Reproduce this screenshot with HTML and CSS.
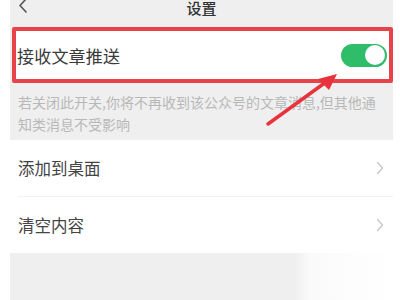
FILE: index.html
```html
<!DOCTYPE html>
<html lang="zh">
<head>
<meta charset="utf-8">
<link rel="stylesheet" href="styles.css">
</head>
<body>
<div class="screen">
  <div class="header">
    <svg class="back" width="12" height="16" viewBox="0 0 12 16"><polyline points="9,1 3,7.5 9,14" fill="none" stroke="#555" stroke-width="1.6" stroke-linecap="round" stroke-linejoin="round"/></svg>
    <span class="title">设置</span>
  </div>
  <div class="highlight">
    <div class="row">
      <span class="label">接收文章推送</span>
      <span class="toggle"><span class="knob"></span></span>
    </div>
  </div>
  <div class="note">若关闭此开关,你将不再收到该公众号的文章消息,但其他通知类消息不受影响</div>
  <div class="list">
    <div class="item"><span class="label">添加到桌面</span><svg class="chev" width="8" height="14" viewBox="0 0 8 14"><polyline points="1.5,1.5 6.5,7 1.5,12.5" fill="none" stroke="#c6c6c6" stroke-width="1.3" stroke-linecap="round" stroke-linejoin="round"/></svg></div>
    <div class="sep"></div>
    <div class="item"><span class="label">清空内容</span><svg class="chev" width="8" height="14" viewBox="0 0 8 14"><polyline points="1.5,1.5 6.5,7 1.5,12.5" fill="none" stroke="#c6c6c6" stroke-width="1.3" stroke-linecap="round" stroke-linejoin="round"/></svg></div>
  </div>
  <div class="bottom"></div>
  <svg class="arrow" width="400" height="300" viewBox="0 0 400 300">
    <line x1="268" y1="124" x2="326" y2="82" stroke="#e8333d" stroke-width="3.5" stroke-linecap="round"/>
    <polygon points="337,74 318,79 329,90" fill="#e8333d"/>
  </svg>
</div>
</body>
</html>
```
FILE: styles.css
```css
html, body {
  margin: 0;
  padding: 0;
  background: #ffffff;
}
body {
  font-family: "Noto Sans CJK SC", "Noto Sans", sans-serif;
  width: 400px;
  height: 300px;
  overflow: hidden;
  position: relative;
}
.screen {
  margin-left: 10px;
  width: 383px;
  background: #efefef;
  display: flex;
  flex-direction: column;
}
.header {
  height: 27px;
  position: relative;
  display: flex;
  align-items: flex-start;
  justify-content: center;
}
.back {
  position: absolute;
  left: 7px;
  top: -2px;
}
.title {
  font-size: 15px;
  color: #333;
  font-weight: 500;
  line-height: 16px;
  margin-top: 0;
}
.highlight {
  margin-left: 2px;
  border: 4px solid #e8434b;
  border-radius: 2px;
  background: #ffffff;
}
.row {
  height: 48px;
  display: flex;
  align-items: center;
  justify-content: space-between;
  padding: 0 2px 0 1px;
}
.row .label {
  font-size: 17px;
  color: #3a3a3a;
  letter-spacing: 0.2px;
}
.toggle {
  width: 46px;
  height: 23px;
  border-radius: 12px;
  background: #2fbd6a;
  display: flex;
  align-items: center;
  justify-content: flex-end;
  padding-right: 2px;
  box-sizing: border-box;
}
.knob {
  width: 20px;
  height: 20px;
  border-radius: 50%;
  background: #ffffff;
}
.note {
  height: 57px;
  box-sizing: border-box;
  padding: 8px 14px 0 8px;
  font-size: 14px;
  line-height: 22px;
  color: #b8b8b8;
}
.list {
  background: #ffffff;
  display: flex;
  flex-direction: column;
}
.item {
  height: 56px;
  display: flex;
  align-items: center;
  justify-content: space-between;
  padding: 0 9px 0 8px;
}
.item .label {
  font-size: 16.5px;
  color: #444;
}
.sep {
  height: 1px;
  background: #f2f2f2;
  margin-left: 8px;
}
.bottom {
  height: 48px;
  background: linear-gradient(to right, #efefef 0, #efefef 285px, #fafafa 300px, #ffffff 383px);
}
.arrow {
  position: absolute;
  left: 0;
  top: 0;
  pointer-events: none;
}
```
